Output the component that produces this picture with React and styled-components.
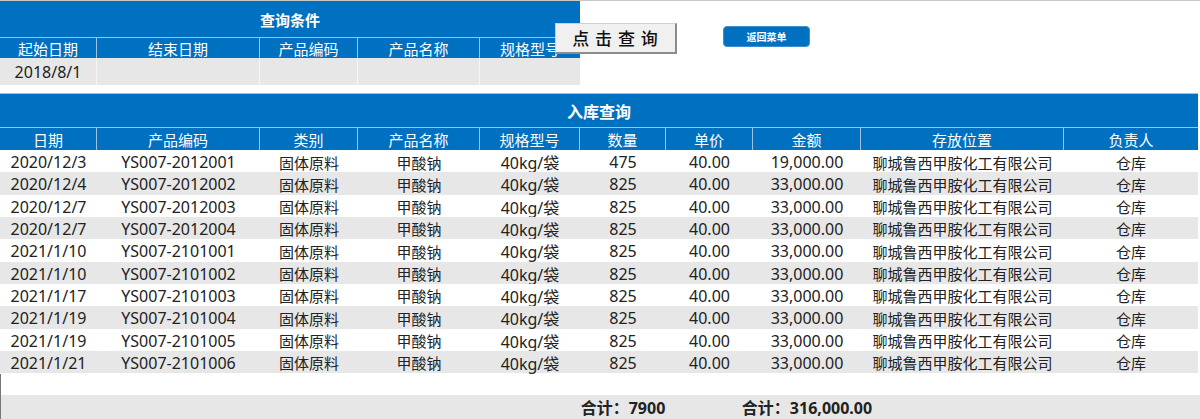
import React from "react";
import styled, { createGlobalStyle } from "styled-components";

const GlobalStyle = createGlobalStyle`
  html, body { margin: 0; padding: 0; background: #ffffff; }
  body { font-family: "Noto Sans", "Noto Sans CJK SC", sans-serif; }
  * { box-sizing: border-box; }
`;

const BLUE = "#0070c0";
const LINE = "#9dc3e6";
const GRAY = "#e7e7e7";
const COLS = [97, 163, 98, 122, 100, 86, 87, 108, 203, 134];
const template = (n) => COLS.slice(0, n).map((c) => `${c}px`).join(" ");

const Page = styled.div`
  width: 1200px;
  height: 419px;
  border-top: 1px solid #c8c8c8;
  display: flex;
  flex-direction: column;
  overflow: hidden;
  font-family: "Noto Sans", "Noto Sans CJK SC", sans-serif;
`;

const TopBar = styled.div`
  display: flex;
  align-items: flex-start;
  height: 84px;
`;

const QueryPanel = styled.div`
  width: 580px;
  display: flex;
  flex-direction: column;
`;

const PanelTitle = styled.div`
  height: ${(p) => p.$h}px;
  background: ${BLUE};
  color: #fff;
  font-weight: 700;
  font-size: ${(p) => p.$size}px;
  display: flex;
  align-items: center;
  justify-content: center;
  ${(p) => (p.$topLine ? `border-top: 1px solid ${LINE};` : "")}
`;

const HeadRow = styled.div`
  display: grid;
  grid-template-columns: ${(p) => p.$cols};
  height: ${(p) => p.$h}px;
  background: ${BLUE};
  border-top: 1px solid ${LINE};
`;

const HeadCell = styled.div`
  color: #fff;
  font-size: 15px;
  display: flex;
  align-items: center;
  justify-content: center;
  white-space: nowrap;
  overflow: hidden;
  border-right: 1px solid ${LINE};
  &:last-child { border-right: none; }
`;

const InputRow = styled.div`
  display: grid;
  grid-template-columns: ${template(5)};
  height: 27px;
  background: ${GRAY};
`;

const InputCell = styled.div`
  font-size: 16px;
  color: #222;
  display: flex;
  align-items: center;
  justify-content: center;
  border-right: 1px solid #f6f6f6;
  &:last-child { border-right: none; }
`;

const QueryButton = styled.button`
  position: relative;
  z-index: 2;
  margin-left: -25px;
  margin-top: 22px;
  width: 122px;
  height: 31px;
  padding: 0 0 1px 0;
  background: #f0f0f0;
  border-top: 1px solid #d0d0d0;
  border-left: 1px solid #d0d0d0;
  border-right: 2px solid #8c8c8c;
  border-bottom: 2px solid #8c8c8c;
  font-family: "Noto Sans CJK SC", sans-serif;
  font-size: 17px;
  font-weight: 500;
  letter-spacing: 1px;
  color: #111;
`;

const MenuButton = styled.button`
  margin-left: 46px;
  margin-top: 25px;
  width: 87px;
  height: 21px;
  padding: 0;
  background: ${BLUE};
  border: 1px solid #3d8fd0;
  border-radius: 4px;
  color: #fff;
  font-family: "Noto Sans CJK SC", sans-serif;
  font-size: 10px;
  font-weight: 700;
`;

const Gap = styled.div`
  height: ${(p) => p.$h}px;
  flex: none;
`;

const Sheet = styled.div`
  width: 1198px;
  display: flex;
  flex-direction: column;
`;

const DataRow = styled.div`
  display: grid;
  grid-template-columns: ${template(10)};
  height: 22.33px;
  background: ${(p) => (p.$alt ? GRAY : "#fff")};
`;

const DataCell = styled.div`
  font-size: ${(p) => (p.$cjk ? 15 : 16)}px;
  color: #222;
  display: flex;
  align-items: center;
  justify-content: center;
  white-space: nowrap;
`;

const Bottom = styled.div`
  flex: 1;
  display: flex;
  flex-direction: column;
  border-left: 1px solid #777;
  margin-top: 1px;
`;

const FooterRow = styled.div`
  display: grid;
  grid-template-columns: 96px ${template(10).split(" ").slice(1).join(" ")};
  height: 24px;
  background: ${GRAY};
`;

const FooterCell = styled.div`
  font-size: 16px;
  font-weight: 700;
  color: #222;
  display: flex;
  align-items: center;
  justify-content: center;
  white-space: nowrap;
`;

const headers = ["日期", "产品编码", "类别", "产品名称", "规格型号", "数量", "单价", "金额", "存放位置", "负责人"];
const queryHeaders = ["起始日期", "结束日期", "产品编码", "产品名称", "规格型号"];

const rows = [
  ["2020/12/3", "YS007-2012001", "475", "19,000.00"],
  ["2020/12/4", "YS007-2012002", "825", "33,000.00"],
  ["2020/12/7", "YS007-2012003", "825", "33,000.00"],
  ["2020/12/7", "YS007-2012004", "825", "33,000.00"],
  ["2021/1/10", "YS007-2101001", "825", "33,000.00"],
  ["2021/1/10", "YS007-2101002", "825", "33,000.00"],
  ["2021/1/17", "YS007-2101003", "825", "33,000.00"],
  ["2021/1/19", "YS007-2101004", "825", "33,000.00"],
  ["2021/1/19", "YS007-2101005", "825", "33,000.00"],
  ["2021/1/21", "YS007-2101006", "825", "33,000.00"],
];

export default function App() {
  return (
    <>
      <GlobalStyle />
      <Page>
        <TopBar>
          <QueryPanel>
            <PanelTitle $h={36} $size={15}>查询条件</PanelTitle>
            <HeadRow $cols={template(5)} $h={21}>
              {queryHeaders.map((h) => (
                <HeadCell key={h}>{h}</HeadCell>
              ))}
            </HeadRow>
            <InputRow>
              <InputCell>2018/8/1</InputCell>
              <InputCell />
              <InputCell />
              <InputCell />
              <InputCell />
            </InputRow>
          </QueryPanel>
          <QueryButton>点 击 查 询</QueryButton>
          <MenuButton>返回菜单</MenuButton>
        </TopBar>
        <Gap $h={8} />
        <Sheet>
          <PanelTitle $h={34} $size={16} $topLine>入库查询</PanelTitle>
          <HeadRow $cols={template(10)} $h={23}>
            {headers.map((h) => (
              <HeadCell key={h}>{h}</HeadCell>
            ))}
          </HeadRow>
          {rows.map((r, i) => (
            <DataRow key={i} $alt={i % 2 === 1}>
              <DataCell>{r[0]}</DataCell>
              <DataCell>{r[1]}</DataCell>
              <DataCell $cjk>固体原料</DataCell>
              <DataCell $cjk>甲酸钠</DataCell>
              <DataCell>40kg/袋</DataCell>
              <DataCell>{r[2]}</DataCell>
              <DataCell>40.00</DataCell>
              <DataCell>{r[3]}</DataCell>
              <DataCell $cjk>聊城鲁西甲胺化工有限公司</DataCell>
              <DataCell $cjk>仓库</DataCell>
            </DataRow>
          ))}
        </Sheet>
        <Bottom>
          <Gap $h={21} />
          <FooterRow>
            <FooterCell />
            <FooterCell />
            <FooterCell />
            <FooterCell />
            <FooterCell />
            <FooterCell>合计：7900</FooterCell>
            <FooterCell />
            <FooterCell>合计：316,000.00</FooterCell>
            <FooterCell />
            <FooterCell />
          </FooterRow>
        </Bottom>
      </Page>
    </>
  );
}
